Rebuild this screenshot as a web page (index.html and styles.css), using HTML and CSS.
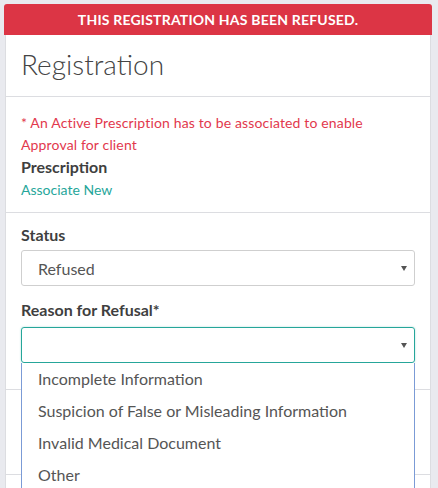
FILE: index.html
```html
<!DOCTYPE html>
<html>
<head>
<meta charset="utf-8">
<link rel="stylesheet" href="styles.css">
</head>
<body>
<div class="page">
  <div class="banner">THIS REGISTRATION HAS BEEN REFUSED.</div>
  <div class="card">
    <div class="card-header"><h1 class="title">Registration</h1></div>
    <div class="section section-rx">
      <p class="warn">* An Active Prescription has to be associated to enable Approval for client</p>
      <div class="label">Prescription</div>
      <a class="link">Associate New</a>
    </div>
    <div class="section section-status">
      <div class="label">Status</div>
      <div class="select"><span class="value">Refused</span><span class="caret"></span></div>
      <div class="label label-reason">Reason for Refusal*</div>
      <div class="select-wrap">
        <div class="select select-focus"><span class="value"></span><span class="caret"></span></div>
        <ul class="dropdown">
          <li>Incomplete Information</li>
          <li>Suspicion of False or Misleading Information</li>
          <li>Invalid Medical Document</li>
          <li>Other</li>
        </ul>
      </div>
    </div>
    <div class="section section-empty"></div>
    <div class="section section-empty"></div>
  </div>
</div>
</body>
</html>
```
FILE: styles.css
```css
* { box-sizing: border-box; }
html, body { margin: 0; padding: 0; }
body {
  background: #e9eaef;
  font-family: Lato, "Open Sans", sans-serif;
  color: #444;
}
.page {
  padding: 4px 6px 0 4px;
}
.banner {
  height: 31px;
  background: #dc3545;
  color: #fff;
  font-weight: 700;
  font-size: 14px;
  letter-spacing: 0.2px;
  line-height: 31px;
  text-align: center;
  border-radius: 3px 3px 0 0;
}
.card {
  margin: 0 1px;
  background: #fff;
  border: 1px solid #dcdde1;
  border-top: 0;
}
.card-header {
  height: 62px;
  padding: 0 15px 4px;
  border-bottom: 1px solid #dcdde1;
  display: flex;
  align-items: center;
}
.title {
  margin: 0;
  font-weight: 300;
  font-size: 28px;
  color: #444;
}
.section {
  padding: 15px 15px 11px;
  border-bottom: 1px solid #dcdde1;
}
.warn {
  margin: 0;
  color: #e2384d;
  font-size: 14px;
  letter-spacing: 0.15px;
  line-height: 22px;
}
.label {
  font-weight: 700;
  font-size: 16px;
  line-height: 22px;
  color: #3f3f3f;
}
.link {
  display: block;
  color: #26a69a;
  font-size: 14px;
  line-height: 22px;
  margin-top: 1px;
}
.section-status {
  padding: 11px 15px 26px;
}
.section-status .label { margin-bottom: 4px; }
.label-reason { margin-top: 13px; }
.section-status .label-reason { margin-bottom: 6px; }
.select-wrap { position: relative; }
.select {
  height: 36px;
  border: 1px solid #cfcfcf;
  border-radius: 3px;
  display: flex;
  align-items: center;
  justify-content: space-between;
  padding: 0 7px 0 16px;
  font-size: 16px;
  color: #555;
}
.select-focus {
  border-color: #26a69a;
  box-shadow: 0 0 2px rgba(38,166,154,0.4);
}
.caret {
  width: 0;
  height: 0;
  border-left: 3px solid transparent;
  border-right: 3px solid transparent;
  border-top: 5px solid #555;
}
.dropdown {
  position: absolute;
  left: 0;
  right: 0;
  top: 36px;
  margin: 0;
  padding: 0;
  list-style: none;
  background: #fff;
  border: 1px solid #7b9bd6;
  border-top: 0;
  z-index: 2;
}
.dropdown li {
  height: 32px;
  line-height: 32px;
  padding-left: 16px;
  font-size: 16px;
  color: #555;
}
.section-empty {
  height: 85px;
  padding: 0;
}
```
